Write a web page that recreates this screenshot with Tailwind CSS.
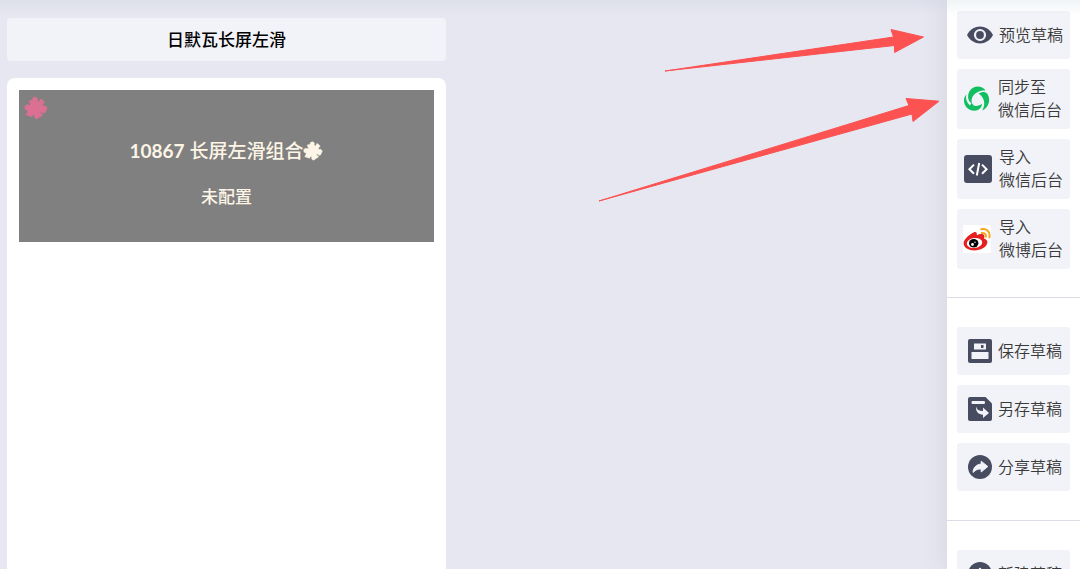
<!DOCTYPE html>
<html lang="zh-CN">
<head>
<meta charset="utf-8">
<meta name="viewport" content="width=device-width, initial-scale=1">
<title>日默瓦长屏左滑</title>
<script src="https://cdn.jsdelivr.net/npm/@tailwindcss/browser@4"></script>
</head>
<body class="relative flex h-screen overflow-hidden bg-[#e7e7f1] font-['Lato','Noto_Sans_CJK_SC',sans-serif]">
<svg class="hidden">
  <symbol id="puzzle" viewBox="0 0 24 24">
    <path fill="currentColor" stroke="currentColor" stroke-width=".6" stroke-linejoin="round" d="M5 4.800 8.200 4.200 9.200 1.600 12.200 1 13.800 2.800 13.200 5 15 6 17 2.800 20.600 6 18.400 8.600 19 10.200 21.400 9.800 23.200 12.400 20.800 17 18.600 17 17.400 15.400 16 16.400 18.800 19 12.600 23 10.400 21.600 10.600 19 9 18.600 7.800 20.800 2.200 18.800 3.800 15.400 3.200 14 1.200 13.400 .8 10.600 2.800 8.600 5.200 9.400 6.600 8.600Z"/>
  </symbol>
</svg>

<main class="flex min-w-0 flex-1 flex-col gap-[17px] pl-[7px] pt-[18px]">
  <header class="flex h-[43px] w-[439px] shrink-0 items-center justify-center rounded bg-[#f2f3f9]">
    <h1 class="text-[17px] font-medium leading-6 text-black">日默瓦长屏左滑</h1>
  </header>
  <section class="w-[439px] flex-1 rounded-t-lg bg-white p-3">
    <div class="relative flex flex-col items-center gap-[18px] bg-[#808080] pb-[32px] pt-[47px] text-[#fdf5e6]">
      <svg class="absolute left-[5px] top-[6px] size-6 text-[#db7093]"><use href="#puzzle"/></svg>
      <h2 class="flex items-center text-[19px] font-medium leading-7"><span><b>10867</b> 长屏左滑组合</span><svg class="size-5"><use href="#puzzle"/></svg></h2>
      <p class="text-[17px] font-medium leading-[27px]">未配置</p>
    </div>
  </section>
</main>

<aside class="h-full w-[133px] shrink-0 overflow-hidden bg-white text-base leading-[23px] text-[#3a3a3a] shadow-[-2px_0_24px_rgba(60,60,70,0.1)]">
  <div class="flex flex-col gap-[10px] border-b border-[#dcdce6] px-[10px] pb-[28px] pt-[11px]">
    <button class="flex h-12 items-center gap-[5px] rounded-[3px] bg-[#f2f3f9] pl-[9px] text-left font-[350]">
      <svg class="w-7 shrink-0" viewBox="0 0 28 20"><path fill="#474c60" d="M1 10C4 4.300 9 1.600 14 1.600S24 4.300 27 10C24 15.700 19 18.400 14 18.400S4 15.700 1 10Z"/><circle cx="14" cy="10" r="5" fill="#474c60" stroke="#f2f3f9" stroke-width="2.200"/></svg>
      <span class="whitespace-nowrap pb-0.5">预览草稿</span>
    </button>
    <button class="flex h-[60px] items-center gap-[7px] rounded-[3px] bg-[#f2f3f9] pl-[6px] text-left font-[350]">
      <svg class="size-7 shrink-0" viewBox="0 0 28 28">
        <g fill="#12bf60">
          <path d="M5.200 10.200C5.800 5 9.800 1.400 14.500 1.400C18 1.400 20.800 2.800 22.500 5.400C17.500 5.200 12.500 7 9.800 11.200C8.500 13.300 8.300 15.800 9 18.400C5.800 16.800 4.800 13.500 5.200 10.200Z"/>
          <path d="M15.500 8.500C19 6.300 22.300 6.400 24.300 8.800C28.300 15 25.400 22.500 19.200 25.600C22.600 19.500 22 12.500 15.500 8.500Z"/>
          <path d="M3.300 9.500C2.300 13.500 3.500 17.500 7 20.400L8.600 17.800 11 20.800C14 21.300 16.800 20.600 19.200 18.800C18.600 23 15.800 25.700 11.500 25.700C5.500 25.700 1 21 1 15.500C1 13 1.800 11 3.300 9.500Z"/>
        </g>
      </svg>
      <span class="whitespace-nowrap pb-0.5">同步至<br>微信后台</span>
    </button>
    <button class="flex h-[60px] items-center gap-[7px] rounded-[3px] bg-[#f2f3f9] pl-[7px] text-left font-[350]">
      <svg class="size-7 shrink-0" viewBox="0 0 28 28"><rect width="28" height="28" rx="3" fill="#474c60"/><path d="M10 9.600 5.400 14.200 10 18.800M18 9.600 22.600 14.200 18 18.800M15.200 8 12.800 20.500" fill="none" stroke="#fff" stroke-width="2"/></svg>
      <span class="whitespace-nowrap pb-0.5">导入<br>微信后台</span>
    </button>
    <button class="flex h-[60px] items-center gap-[8px] rounded-[3px] bg-[#f2f3f9] pl-[6px] text-left font-[350]">
      <svg class="size-7 shrink-0" viewBox="0 0 28 28">
        <rect width="28" height="28" fill="#fff"/>
        <path fill="#e62020" d="M10.500 7.500C13 6.200 14.400 7.600 13.800 10.200C17 8.600 21.200 8.600 21.400 11.200C21.500 12.400 20.800 13.200 21 13.500C23.500 14.200 24.700 15.800 24.300 18C23.500 22.400 17.500 25.400 11.500 25.400C5.500 25.400 .6 22.500 .6 18.200C.6 14.800 5.500 9.800 10.500 7.500Z"/>
        <ellipse cx="11.500" cy="18" rx="7.800" ry="5" fill="#fff" transform="rotate(-7 11.500 18)"/>
        <ellipse cx="10.700" cy="18.200" rx="4.700" ry="4.200" fill="#000"/>
        <circle cx="9.500" cy="19.500" r="1.400" fill="#fff"/><circle cx="12" cy="17.300" r=".7" fill="#fff"/>
        <path d="M18.200 4.300C23.500 3 27.600 6.800 26.400 12.500M18.800 8C21.500 7.600 23.300 9.300 22.800 11.800" fill="none" stroke="#f9a61c" stroke-width="2" stroke-linecap="round"/>
      </svg>
      <span class="whitespace-nowrap pb-0.5">导入<br>微博后台</span>
    </button>
  </div>
  <div class="flex flex-col gap-[10px] border-b border-[#dcdce6] px-[10px] py-[29px]">
    <button class="flex h-12 items-center gap-[6px] rounded-[3px] bg-[#f2f3f9] pl-[11px] text-left font-[350]">
      <svg class="size-6 shrink-0" viewBox="0 0 24 24"><rect width="24" height="24" rx="2" fill="#474c60"/><path fill="#f2f3f9" d="M6 4.500H18V10.500H6ZM3.500 13H20.500V20H3.500Z"/><path fill="#474c60" d="M13 6H15.500V9H13Z"/></svg>
      <span class="whitespace-nowrap pb-0.5">保存草稿</span>
    </button>
    <button class="flex h-12 items-center gap-[6px] rounded-[3px] bg-[#f2f3f9] pl-[11px] text-left font-[350]">
      <svg class="size-6 shrink-0" viewBox="0 0 24 24"><path fill="#474c60" d="M2 0H17.500L24 6.500V22Q24 24 22 24H2Q0 24 0 22V2Q0 0 2 0Z"/><rect x="3.500" y="4" width="13.500" height="3" rx="1.200" fill="#f2f3f9"/><path fill="#f2f3f9" d="M8 9.500C8.500 12.600 11 14 15 14V10.500L21 16 15 21V17.800C10.500 17.600 7.500 14.500 8 9.500Z"/></svg>
      <span class="whitespace-nowrap pb-0.5">另存草稿</span>
    </button>
    <button class="flex h-12 items-center gap-[6px] rounded-[3px] bg-[#f2f3f9] pl-[11px] text-left font-[350]">
      <svg class="size-6 shrink-0" viewBox="0 0 24 24"><circle cx="12" cy="12" r="12" fill="#474c60"/><path fill="#f2f3f9" stroke="#f2f3f9" stroke-width="1" stroke-linejoin="round" d="M13.200 6.200 19.800 11.500 13.200 17V14C10 13.600 8 14.700 5 17.400C5.300 12.500 8.300 9.400 13.200 9.100Z"/></svg>
      <span class="whitespace-nowrap pb-0.5">分享草稿</span>
    </button>
  </div>
  <div class="flex flex-col px-[10px] pt-[29px]">
    <button class="flex h-12 items-center gap-[6px] rounded-[3px] bg-[#f2f3f9] pl-[11px] text-left font-[350]">
      <svg class="size-6 shrink-0" viewBox="0 0 24 24"><circle cx="12" cy="12" r="12" fill="#474c60"/><path stroke="#f2f3f9" stroke-width="2.500" stroke-linecap="round" d="M12 7V17M7 12H17"/></svg>
      <span class="whitespace-nowrap pb-0.5">新建草稿</span>
    </button>
  </div>
</aside>

<div class="pointer-events-none absolute inset-x-0 top-0 h-4 bg-linear-to-b from-[#a0b4c3]/15 to-transparent"></div>
<svg class="pointer-events-none absolute right-[140px] top-[28px] h-[176px] w-[343px]" viewBox="597 28 343 176">
  <g fill="#fc5252" stroke="#fc5252" stroke-width="1" stroke-linejoin="round">
    <path d="M665 71 893.500 37 891 29.500 923.500 37 894.500 52.500V45.500Z"/>
    <path d="M599 201 909 105.500 906 98.500 939 101.200 913 121.500 912 114Z"/>
  </g>
</svg>
</body>
</html>
